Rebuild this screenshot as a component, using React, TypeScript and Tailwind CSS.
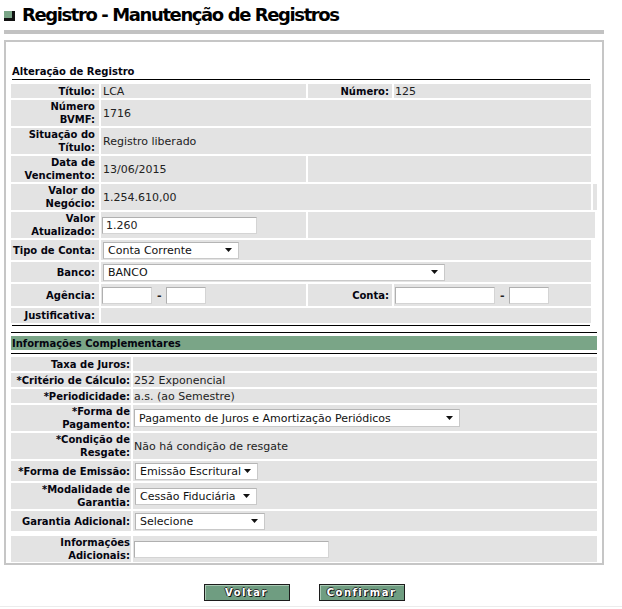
import React from "react";

type Kids = { children?: React.ReactNode; className?: string };

// bold right-aligned label cell
const Lbl: React.FC<Kids> = ({ children, className = "" }) => (
  <div
    className={`flex shrink-0 items-center justify-end bg-[#e3e3e3] text-right text-[10px] font-bold leading-[13px] text-[#050510] ${className}`}
  >
    <span>{children}</span>
  </div>
);

// plain value cell
const Val: React.FC<Kids> = ({ children, className = "" }) => (
  <div
    className={`flex shrink-0 items-center bg-[#e3e3e3] text-[11px] leading-[13px] text-[#222] ${className}`}
  >
    {children}
  </div>
);

const Arrow = () => (
  <svg width="7" height="4" viewBox="0 0 7 4" className="shrink-0">
    <path d="M0 0h7L3.5 4z" fill="#111" />
  </svg>
);

const Select: React.FC<{ text: string; className: string }> = ({ text, className }) => (
  <div
    className={`flex items-center justify-between border border-[#c9c9c9] border-t-[#b5b5b5] border-l-[#b5b5b5] bg-white pl-[4px] pr-[6px] text-[11px] leading-[13px] text-[#111] ${className}`}
  >
    <span className="whitespace-nowrap">{text}</span>
    <Arrow />
  </div>
);

const Field: React.FC<{ value?: string; className: string }> = ({ value = "", className }) => (
  <input
    readOnly
    value={value}
    className={`h-[17px] border border-[#d4d4d4] border-t-[#b0b0b0] border-l-[#b0b0b0] bg-white px-[3px] text-[11px] leading-[13px] text-[#222] outline-none ${className}`}
  />
);

const App: React.FC = () => {
  return (
    <div className="relative h-[609px] w-[622px] overflow-hidden bg-white font-['DejaVu_Sans',sans-serif]">
      <div className="ml-[4px] w-[600px]">
        {/* Title */}
        <div className="flex items-center gap-[7px] pt-[5px]">
          <div className="mt-[1px] h-[10px] w-[11px] border-b-[3px] border-r-[3px] border-[#111] bg-[#7aa587]" />
          <h1 className="text-[18px] font-bold leading-[20px] tracking-[-1.4px] text-black">
            Registro - Manutenção de Registros
          </h1>
        </div>
        <div className="mt-[5px] h-[4px] w-[600px] bg-[#c2c2c2]" />

        {/* Main box */}
        <div className="mt-[6px] border-2 border-[#c6c6c6] pb-[1px] pl-[5px] pt-[23px]">
          <div className="pl-[1px] text-[10px] font-bold leading-[13px] text-[#050510]">
            Alteração de Registro
          </div>
          <div className="ml-[1px] mt-[1px] h-px w-[578px] bg-black" />

          <div className="mt-[4px] flex flex-col gap-[2px]">
            <div className="flex h-[14px] gap-[2px]">
              <Lbl className="w-[88px] pr-[4px]">Título:</Lbl>
              <Val className="w-[205px] pl-[2px]">LCA</Val>
              <Lbl className="w-[84px] pr-[3px]">Número:</Lbl>
              <Val className="w-[197px] pl-[1px]">125</Val>
            </div>
            <div className="flex h-[26px] gap-[2px]">
              <Lbl className="w-[88px] pr-[4px]">
                Número
                <br />
                BVMF:
              </Lbl>
              <Val className="w-[490px] pl-[2px]">1716</Val>
            </div>
            <div className="flex h-[26px] gap-[2px]">
              <Lbl className="w-[88px] pr-[4px]">
                Situação do
                <br />
                Título:
              </Lbl>
              <Val className="w-[490px] pl-[2px]">Registro liberado</Val>
            </div>
            <div className="flex h-[26px] gap-[2px]">
              <Lbl className="w-[88px] pr-[4px]">
                Data de
                <br />
                Vencimento:
              </Lbl>
              <Val className="w-[205px] pl-[2px]">13/06/2015</Val>
              <Val className="w-[283px]" />
            </div>
            <div className="flex h-[26px] gap-[2px]">
              <Lbl className="w-[88px] pr-[4px]">
                Valor do
                <br />
                Negócio:
              </Lbl>
              <Val className="w-[490px] pl-[2px]">1.254.610,00</Val>
              <Val className="w-[4px]" />
            </div>
            <div className="flex h-[26px] gap-[2px]">
              <Lbl className="w-[88px] pr-[4px]">
                Valor
                <br />
                Atualizado:
              </Lbl>
              <Val className="w-[205px] pl-[1px]">
                <Field value="1.260" className="w-[155px]" />
              </Val>
              <Val className="w-[287px]" />
            </div>
            <div className="flex h-[20px] gap-[2px]">
              <Lbl className="w-[88px] pr-[4px]">Tipo de Conta:</Lbl>
              <Val className="w-[490px] pl-[2px]">
                <Select text="Conta Corrente" className="h-[17px] w-[136px]" />
              </Val>
            </div>
            <div className="flex h-[20px] gap-[2px]">
              <Lbl className="w-[88px] pr-[4px]">Banco:</Lbl>
              <Val className="w-[490px] pl-[2px]">
                <Select text="BANCO" className="h-[17px] w-[342px]" />
              </Val>
            </div>
            <div className="flex h-[22px] gap-[2px]">
              <Lbl className="w-[88px] pr-[4px]">Agência:</Lbl>
              <Val className="w-[205px] gap-[5px] pl-[1px]">
                <Field className="w-[50px]" />
                <span className="w-[4px] font-bold">-</span>
                <Field className="w-[40px]" />
              </Val>
              <Lbl className="w-[84px] pr-[3px]">Conta:</Lbl>
              <Val className="w-[197px] gap-[5px] pl-[1px]">
                <Field className="w-[100px]" />
                <span className="w-[4px] font-bold">-</span>
                <Field className="w-[40px]" />
              </Val>
            </div>
            <div className="flex h-[15px] gap-[2px]">
              <Lbl className="w-[88px] pr-[4px]">Justificativa:</Lbl>
              <Val className="w-[490px]" />
            </div>
          </div>

          <div className="ml-[1px] mt-[2px] h-px w-[578px] bg-black" />

          {/* Informações Complementares */}
          <div className="mt-[6px] h-px w-[586px] bg-black" />
          <div className="mt-[3px] flex h-[14px] w-[586px] items-center bg-[#7aa587] pl-[1px] text-[10px] font-bold leading-[13px] text-[#050510]">
            Informações Complementares
          </div>
          <div className="mt-[3px] h-px w-[586px] bg-black" />

          <div className="mt-[3px] flex flex-col gap-[2px]">
            <div className="flex h-[14px] gap-[2px]">
              <Lbl className="w-[120px] pr-[1px]">Taxa de Juros:</Lbl>
              <Val className="w-[464px]" />
            </div>
            <div className="flex h-[14px] gap-[2px]">
              <Lbl className="w-[120px] pr-[1px]">*Critério de Cálculo:</Lbl>
              <Val className="w-[464px] pl-[1px]">252 Exponencial</Val>
            </div>
            <div className="flex h-[14px] gap-[2px]">
              <Lbl className="w-[120px] pr-[1px]">*Periodicidade:</Lbl>
              <Val className="w-[464px] pl-[1px]">a.s. (ao Semestre)</Val>
            </div>
            <div className="flex h-[26px] gap-[2px]">
              <Lbl className="w-[120px] pr-[1px]">
                *Forma de
                <br />
                Pagamento:
              </Lbl>
              <Val className="w-[464px] pl-[1px]">
                <Select
                  text="Pagamento de Juros e Amortização Periódicos"
                  className="h-[18px] w-[326px]"
                />
              </Val>
            </div>
            <div className="flex h-[26px] gap-[2px]">
              <Lbl className="w-[120px] pr-[1px]">
                *Condição de
                <br />
                Resgate:
              </Lbl>
              <Val className="w-[464px] pl-[1px]">Não há condição de resgate</Val>
            </div>
            <div className="flex h-[20px] gap-[2px]">
              <Lbl className="w-[120px] pr-[1px]">*Forma de Emissão:</Lbl>
              <Val className="w-[464px] pl-[2px]">
                <Select text="Emissão Escritural" className="h-[17px] w-[123px]" />
              </Val>
            </div>
            <div className="flex h-[26px] gap-[2px]">
              <Lbl className="w-[120px] pr-[1px]">
                *Modalidade de
                <br />
                Garantia:
              </Lbl>
              <Val className="w-[464px] pl-[2px]">
                <Select text="Cessão Fiduciária" className="h-[17px] w-[122px]" />
              </Val>
            </div>
            <div className="flex h-[20px] gap-[2px]">
              <Lbl className="w-[120px] pr-[1px]">Garantia Adicional:</Lbl>
              <Val className="w-[464px] pl-[2px]">
                <Select text="Selecione" className="h-[17px] w-[130px]" />
              </Val>
            </div>
            <div className="mt-[3px] flex h-[26px] gap-[2px]">
              <Lbl className="w-[120px] pr-[1px]">
                Informações
                <br />
                Adicionais:
              </Lbl>
              <Val className="w-[464px] pl-[1px]">
                <Field className="w-[195px]" />
              </Val>
            </div>
          </div>
        </div>

        {/* Buttons */}
        <div className="mt-[19px] flex justify-center gap-[29px]">
          {["Voltar", "Confirmar"].map((b) => (
            <button
              key={b}
              className="h-[17px] w-[86px] border border-[#1c1c1c] bg-[#6f9d81] text-[10px] font-bold leading-[13px] tracking-[1.5px] text-white shadow-[inset_1px_1px_0_#a9c8b3] [text-shadow:1px_1px_0_#111,-1px_0_0_#333,0_-1px_0_#333]"
            >
              {b}
            </button>
          ))}
        </div>
      </div>
      <div className="mt-[5px] h-px w-full bg-[#ececec]" />
    </div>
  );
};

export default App;
